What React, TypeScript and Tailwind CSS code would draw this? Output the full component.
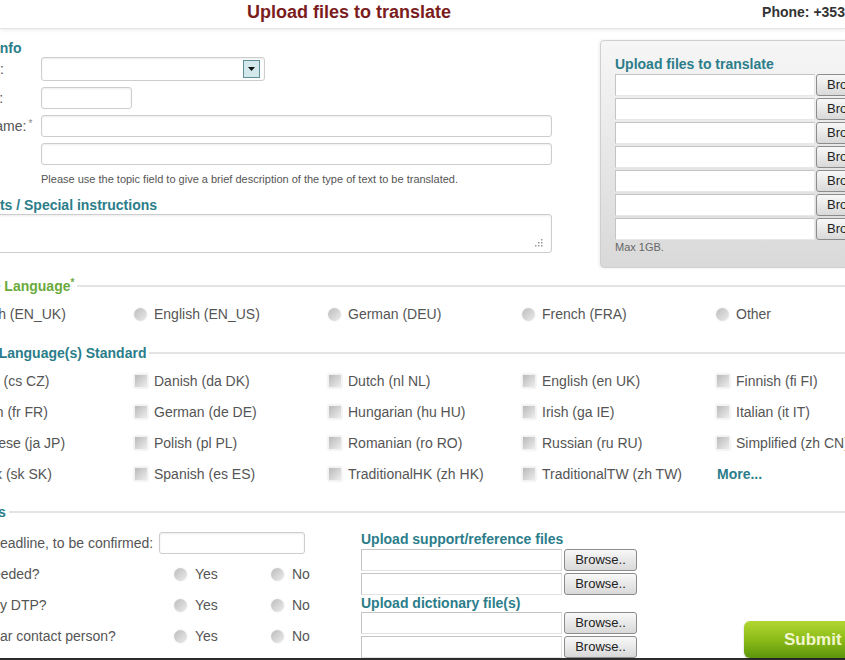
import React from 'react';

const heading = 'h-[18px] leading-[18px] text-[14px] font-bold text-[#2b7d8a] whitespace-nowrap';
const label = 'text-[14px] text-[#555] whitespace-nowrap';
const field = 'bg-white border border-[#cdcdcd] rounded-[3px] shadow-[inset_0_1px_2px_rgba(0,0,0,0.08)]';

function Radio() {
  return (
    <span className="inline-block w-[13px] h-[13px] shrink-0 rounded-full bg-gradient-to-br from-[#bcbcbc] to-[#ececec] shadow-[0_0_2px_rgba(0,0,0,0.1)]" />
  );
}

function Check() {
  return (
    <span className="inline-block w-[14px] h-[14px] shrink-0 bg-gradient-to-br from-[#b9b9b9] to-[#eeeeee] border border-[#f2f2f2] shadow-[0_0_2px_rgba(0,0,0,0.12)]" />
  );
}

function Browse() {
  return (
    <div className="ml-[2px] w-[73px] h-[22px] shrink-0 flex items-center justify-center text-[13px] text-[#222] border border-[#8c8c8c] rounded-[3px] bg-gradient-to-b from-[#f8f8f8] to-[#d9d9d9]">
      Browse..
    </div>
  );
}

function FileRow() {
  return (
    <div className="flex h-[22px]">
      <div className="w-[201px] h-[22px] bg-white border border-[#c4c4c4] border-b-[#e2e2e2] border-r-[#e2e2e2]" />
      <Browse />
    </div>
  );
}

function Legend({ children }: { children: React.ReactNode }) {
  return (
    <div className="flex items-center h-[18px]">
      <div className="ml-[13px]">{children}</div>
      <div className="flex-1 h-[2px] ml-[3px] bg-[#e4e4e4]" />
    </div>
  );
}

function FormRow({ text, children }: { text: React.ReactNode; children: React.ReactNode }) {
  return (
    <div className="flex items-center">
      <div className={`w-[101px] ${label}`}>{text}</div>
      {children}
    </div>
  );
}

const sourceLangs = ['English (EN_UK)', 'English (EN_US)', 'German (DEU)', 'French (FRA)', 'Other'];

const targetLangs = [
  'Czech (cs CZ)', 'Danish (da DK)', 'Dutch (nl NL)', 'English (en UK)', 'Finnish (fi FI)',
  'French (fr FR)', 'German (de DE)', 'Hungarian (hu HU)', 'Irish (ga IE)', 'Italian (it IT)',
  'Japanese (ja JP)', 'Polish (pl PL)', 'Romanian (ro RO)', 'Russian (ru RU)', 'Simplified (zh CN)',
  'Slovak (sk SK)', 'Spanish (es ES)', 'TraditionalHK (zh HK)', 'TraditionalTW (zh TW)',
];

const questions = ['Notary needed?', 'Needs any DTP?', 'Use regular contact person?'];

export default function App() {
  return (
    <div className="w-[845px] h-[660px] overflow-hidden bg-white font-['Liberation_Sans',Arial,sans-serif]">
      {/* header */}
      <div className="h-[29px] flex items-start border-b border-[#e4e4e4] shadow-[0_2px_3px_rgba(0,0,0,0.06)] overflow-hidden">
        <div className="pl-[247px] leading-[24px] text-[18px] font-bold text-[#7b1d1d] whitespace-nowrap">
          Upload files to translate
        </div>
        <div className="ml-[311px] leading-[24px] text-[14px] font-bold text-[#333] whitespace-nowrap">
          Phone: +353 1 234 5678
        </div>
      </div>

      <div className="-ml-[60px] w-[930px]">
        {/* top: contact form + upload panel */}
        <div className="flex items-start">
          <div className="w-[612px] shrink-0 pt-[10px]">
            <div className={`ml-[13px] ${heading}`}>Client Info</div>
            <div className="flex flex-col gap-[6px]">
              <FormRow text="Company:">
                <div className={`w-[224px] h-[24px] ${field} flex items-center justify-end pr-[4px]`}>
                  <div className="w-[17px] h-[18px] bg-[#d3e8eb] border border-[#5f8f96] flex items-center justify-center">
                    <svg width="7" height="4" viewBox="0 0 7 4">
                      <path d="M0 0h7L3.5 4z" fill="#111" />
                    </svg>
                  </div>
                </div>
              </FormRow>
              <FormRow text="Total cost:">
                <div className={`w-[91px] h-[22px] ${field}`} />
              </FormRow>
              <FormRow
                text={
                  <>
                    Project name:<span className="ml-[2px] text-[10px] align-top text-[#888]">*</span>
                  </>
                }
              >
                <div className={`w-[511px] h-[22px] ${field}`} />
              </FormRow>
              <FormRow text="Topic:">
                <div className={`w-[511px] h-[22px] ${field}`} />
              </FormRow>
            </div>
            <p className="ml-[101px] mt-[7px] text-[11px] leading-[14px] text-[#555] whitespace-nowrap">
              Please use the topic field to give a brief description of the type of text to be translated.
            </p>
            <div className={`mt-[10px] ${heading}`}>Comments / Special instructions</div>
            <div className={`w-[612px] h-[39px] ${field} flex items-end justify-end pr-[8px] pb-[5px]`}>
              <svg width="8" height="8" viewBox="0 0 8 8">
                <g fill="#9a9a9a">
                  <rect x="6" y="0" width="1.5" height="1.5" />
                  <rect x="6" y="3" width="1.5" height="1.5" />
                  <rect x="3" y="3" width="1.5" height="1.5" />
                  <rect x="6" y="6" width="1.5" height="1.5" />
                  <rect x="3" y="6" width="1.5" height="1.5" />
                  <rect x="0" y="6" width="1.5" height="1.5" />
                </g>
              </svg>
            </div>
          </div>

          <div className="ml-[48px] mt-[11px] w-[290px] h-[228px] shrink-0 pl-[14px] pt-[14px] border border-[#cfcfcf] rounded-[4px] bg-gradient-to-b from-[#f6f6f6] to-[#d9d9d9] shadow-[-1px_0_3px_rgba(0,0,0,0.08)]">
            <div className={heading}>Upload files to translate</div>
            <div className="mt-[1px] flex flex-col gap-[2px]">
              {Array.from({ length: 7 }).map((_, i) => (
                <div key={i} className="flex">
                  <div className="w-[202px] h-[22px] bg-white border border-[#c4c4c4] border-b-[#e8e8e8] border-r-[#e8e8e8]" />
                  <div className="ml-[1px] w-[73px] h-[22px] shrink-0 flex items-center pl-[10px] text-[13px] text-[#222] border border-[#8c8c8c] rounded-[3px] bg-gradient-to-b from-[#f8f8f8] to-[#d9d9d9]">
                    Browse..
                  </div>
                </div>
              ))}
            </div>
            <div className="text-[11px] leading-[14px] text-[#666]">Max 1GB.</div>
          </div>
        </div>

        {/* source language */}
        <div className="mt-[9px]">
          <Legend>
            <span className="text-[14px] font-bold text-[#6aaa3c] leading-[18px]">
              Source Language<span className="text-[10px] align-top">*</span>
            </span>
          </Legend>
        </div>
        <div className="mt-[9px] grid grid-cols-[repeat(5,194px)]">
          {sourceLangs.map((l) => (
            <div key={l} className="h-[20px] flex items-center gap-[7px]">
              <Radio />
              <span className={label}>{l}</span>
            </div>
          ))}
        </div>

        {/* target languages */}
        <div className="mt-[20px]">
          <Legend>
            <span className="text-[14px] font-bold text-[#2b7d8a] leading-[18px]">Target Language(s) Standard</span>
          </Legend>
        </div>
        <div className="mt-[9px] grid grid-cols-[repeat(5,194px)] gap-y-[11px]">
          {targetLangs.map((l) => (
            <div key={l} className="h-[20px] flex items-center gap-[6px]">
              <Check />
              <span className={label}>{l}</span>
            </div>
          ))}
          <div className="h-[20px] flex items-center pl-[1px] text-[14px] font-bold text-[#2b7d8a]">More...</div>
        </div>

        {/* options */}
        <div className="mt-[19px]">
          <Legend>
            <span className="text-[14px] font-bold text-[#2b7d8a] leading-[18px]">Options</span>
          </Legend>
        </div>
        <div className="h-[137px] flex items-start">
          <div className="w-[421px] shrink-0 pt-[11px] flex flex-col gap-[9px]">
            <div className="h-[22px] flex items-center">
              <span className={label}>Flexible deadline, to be confirmed:</span>
              <div className={`ml-[6px] w-[146px] h-[22px] ${field}`} />
            </div>
            {questions.map((q) => (
              <div key={q} className="h-[22px] flex items-center">
                <div className={`w-[234px] ${label}`}>{q}</div>
                <div className="w-[97px] flex items-center gap-[8px]">
                  <Radio />
                  <span className={label}>Yes</span>
                </div>
                <div className="flex items-center gap-[8px]">
                  <Radio />
                  <span className={label}>No</span>
                </div>
              </div>
            ))}
          </div>

          <div className="w-[276px] shrink-0">
            <div className={`mt-[9px] ${heading}`}>Upload support/reference files</div>
            <div className="mt-[1px] flex flex-col gap-[2px]">
              <FileRow />
              <FileRow />
            </div>
            <div className="h-[17px] leading-[17px] text-[14px] font-bold text-[#2b7d8a] whitespace-nowrap">
              Upload dictionary file(s)
            </div>
            <div className="flex flex-col gap-[2px]">
              <FileRow />
              <FileRow />
            </div>
          </div>

          <div className="ml-[107px] mt-[100px] w-[130px] h-[37px] shrink-0 rounded-[6px] bg-gradient-to-b from-[#b2d630] via-[#8cbc18] to-[#5d960c] shadow-[0_1px_2px_rgba(0,0,0,0.25)] flex items-center pl-[40px] text-[17px] font-bold text-[#f2f6cf]">
            Submit
          </div>
        </div>
        <div className="h-[2px] bg-[#2c2c2c]" />
      </div>
    </div>
  );
}
